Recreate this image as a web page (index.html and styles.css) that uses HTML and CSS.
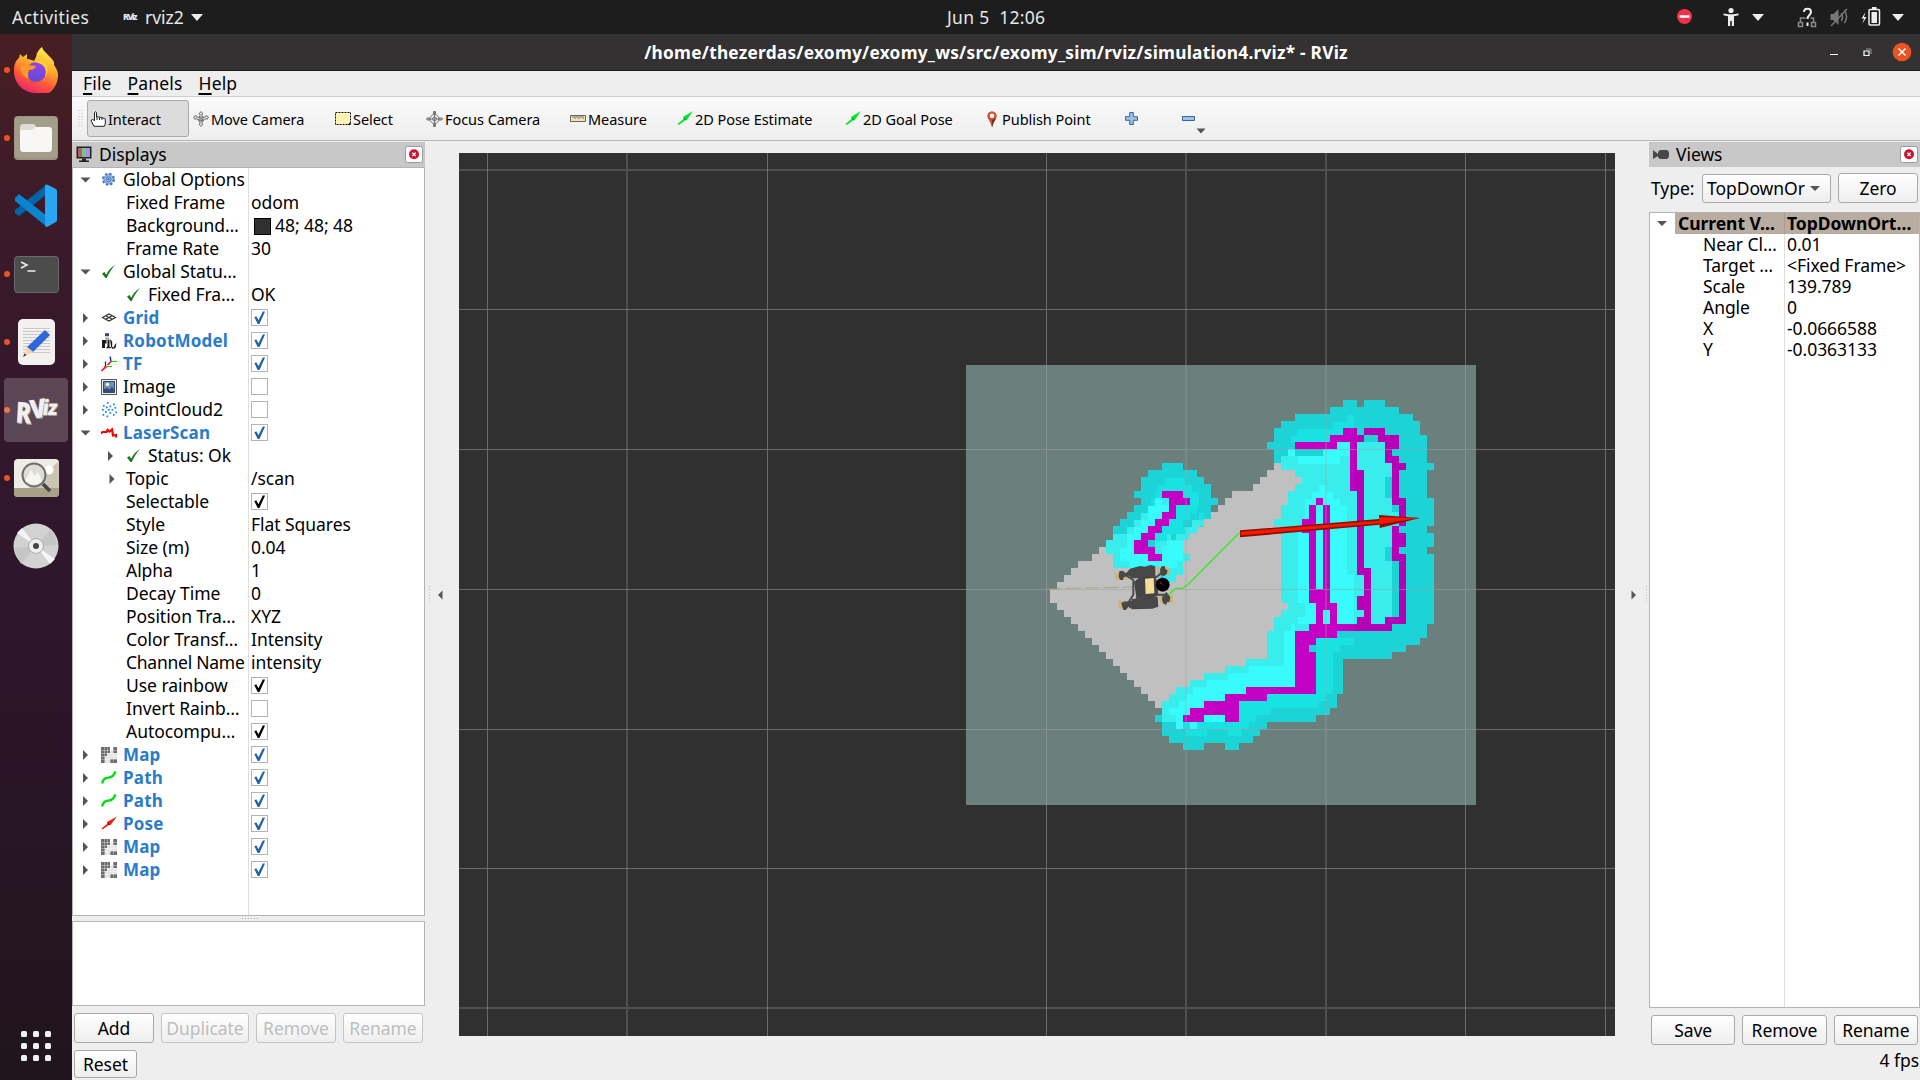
FILE: index.html
```html
<!DOCTYPE html>
<html lang="en">
<head>
<meta charset="utf-8">
<title>RViz</title>
<link rel="stylesheet" href="styles.css">
</head>
<body>
<svg width="0" height="0" class="defs">
  <defs>
    <symbol id="i-gear" viewBox="0 0 16 16"><circle cx="7.500" cy="7.300" r="5.300" fill="none" stroke="#4577b8" stroke-width="2.400" stroke-dasharray="2.400 1.760"/><circle cx="7.500" cy="7.300" r="4.700" fill="#9dbde6" stroke="#4577b8" stroke-width=".7"/><circle cx="7.500" cy="7.300" r="2.500" fill="none" stroke="#4577b8" stroke-width="1"/><circle cx="7.500" cy="7.300" r="1" fill="#3465a4"/></symbol>
    <symbol id="i-ok" viewBox="0 0 16 16"><path d="M1 9.500 3.500 8l1.700 2.800C7 6.500 9.500 4 13.800 1 10.500 5.200 7.500 9.500 5.800 14H4.400z" fill="#1c7a1c"/></symbol>
    <symbol id="i-grid" viewBox="0 0 16 16"><path d="M1.500 7.500 8 4l6.500 3.500L8 11zM4.700 5.800l6.600 3.500M11.300 5.800 4.700 9.300" fill="none" stroke="#333" stroke-width="1.200"/></symbol>
    <symbol id="i-robot" viewBox="0 0 16 16"><path d="M4 1h4M4 2.500h4" stroke="#35457e" stroke-width="1.300"/><path d="M3.500 4.500h5L8 7H5z" fill="#aaa"/><path d="M1 7h4.500v3.500H4V15H1zM6.500 7h2v7h1.300v1.200H5L6.500 13zM9 6l2.200 2.500v5.500l1.300.5L14 11.500l1.500-1.500-1 5-3 1L10 14z" fill="#1c1c1c"/></symbol>
    <symbol id="i-tf" viewBox="0 0 16 16"><path d="M10 5.500H16M6 10.500h5" stroke="#00e000" stroke-width="1.200"/><path d="M10 5.500 9 .5M4.500 11V5.500" stroke="#1717ff" stroke-width="1.300"/><path d="M10 5.500 6.500 9M4.500 11l-4 4" stroke="#f01010" stroke-width="1.600"/><circle cx="4.500" cy="11" r="1.300" fill="#f22"/></symbol>
    <symbol id="i-image" viewBox="0 0 16 16"><path d="M.5.500h15v15H.5z" fill="#ecece8" stroke="#555"/><path d="M2.500 2.500h11v11h-11z" fill="#6d8db8" stroke="#344a73"/><path d="M3 13v-3l3-1 3 1.500 2-3 2 3.500v2z" fill="#364b76"/><circle cx="6.500" cy="5.500" r="1.800" fill="#f8f4c8"/></symbol>
    <symbol id="i-cloud" viewBox="0 0 16 16"><path d="M6 0h1.700v1.700H6zM12 1.500h1.700v1.700H12zM2 3h1.700v1.700H2zM8.500 3.500h1.700v1.700H8.500zM5 4.500h1.700v1.700H5zM13.500 5h1.700v1.700h-1.700zM1 7h1.700v1.700H1zM7 7h1.700v1.700H7zM10.500 7h1.700v1.700h-1.700zM4 9h1.700v1.700H4zM14.300 9.500H16v1.700h-1.700zM8.500 10h1.700v1.700H8.500zM1.500 12h1.700v1.700H1.500zM12 12h1.700v1.700H12zM5.500 13.500h1.700v1.700H5.500z" fill="#1c86ee"/></symbol>
    <symbol id="i-laser" viewBox="0 0 16 16"><path d="M0 8.500 1.500 7h4L6.500 5l2 1.500L11 4.500l1 6 3-.5v2.500" fill="none" stroke="#f00" stroke-width="2.200"/></symbol>
    <symbol id="i-map" viewBox="0 0 16 16"><path d="M3 3h13v13H3z" fill="#e4e4e4"/><path d="M0 0h9v6H6v3H4v7H0zM12 0h4v6h-4zM9 12h7v4H9z" fill="#6d6d6d"/><path d="M3.500 0v16M6.500 0v16M9.500 0v16M12.500 0v16M0 3.500h16M0 6.500h16M0 9.500h16M0 12.500h16" stroke="#fff" stroke-width=".35"/></symbol>
    <symbol id="i-path" viewBox="0 0 16 16"><path d="M1 13.500C2.500 8 4.500 8 8 7.500S12.500 5.500 14.500 1.500" fill="none" stroke="#00dc14" stroke-width="2.400"/></symbol>
    <symbol id="i-pose" viewBox="0 0 16 16"><path d="M.5 12.500 6.500 7.500 6 6 16 .5 9.500 9 8.500 8.500 1.500 13.500z" fill="#f22008"/><path d="M6 6l3.500 3-2.500-.3z" fill="#900"/></symbol>
    <symbol id="i-green" viewBox="0 0 16 16"><path d="M.5 13 7 7.500 6 6 16 0 9.500 9.500 8.500 9 2 14z" fill="#00e828"/><path d="M6.500 6l2.800 2.800-2.300-.6z" fill="#074"/></symbol>
    <symbol id="i-arr" viewBox="0 0 16 16"><path d="M6 3 11 8l-5 5z" fill="#555"/></symbol>
    <symbol id="i-arrd" viewBox="0 0 16 16"><path d="M3.500 5.500h10L8.500 10.500z" fill="#555"/></symbol>
    <symbol id="i-close" viewBox="0 0 18 17"><rect x=".5" y=".5" width="17" height="16" rx="2" fill="#fdfdfd" stroke="#9a9a9a"/><circle cx="9" cy="8.300" r="5" fill="#cc1430"/><path d="M7.300 6.600l3.400 3.400M10.700 6.600 7.300 10" stroke="#fff" stroke-width="1.300"/></symbol>
    <linearGradient id="mag" gradientUnits="userSpaceOnUse" x1="341" x2="342" y1="0" y2="0"><stop offset="0" stop-color="#c500c5"/><stop offset="1" stop-color="#b600b6"/></linearGradient>
    <linearGradient id="ff" x1=".7" y1="0" x2=".3" y2="1"><stop offset="0" stop-color="#fff44f"/><stop offset=".35" stop-color="#ffb32c"/><stop offset=".65" stop-color="#ff5a36"/><stop offset="1" stop-color="#e5177b"/></linearGradient>
    <linearGradient id="pp" x1=".7" y1="0" x2=".3" y2="1"><stop offset="0" stop-color="#9a45e8"/><stop offset="1" stop-color="#5b4bd0"/></linearGradient>
  </defs>
</svg>

<header class="topbar">
  <span class="activities">Activities</span>
  <span class="rv-mini">RViz</span>
  <span class="appname">rviz2</span>
  <svg class="tri" width="12" height="7"><path d="M0 0h12L6 7z" fill="#eee"/></svg>
  <span class="clock">Jun 5&nbsp; 12:06</span>
  <svg class="tray" width="250" height="34" viewBox="0 0 250 34">
    <circle cx="14.500" cy="16.500" r="7.500" fill="#f5304a"/><path d="M9.500 16.500h10" stroke="#fff" stroke-width="2.500"/>
    <circle cx="61" cy="10.500" r="2.600" fill="#eee"/><path d="M53.500 13.500l5 .8h5l5-.8v1.700l-4.500 1V26h-2.200v-5h-1.600v5H58v-9.800l-4.500-1z" fill="#eee"/>
    <path d="M82 14h12l-6 7z" fill="#eee"/>
    <path d="M128.500 22.500h4v4h-4zM141.500 22.500h4v4h-4zM130.500 22v-4h5M143.500 22v-4h-3" fill="none" stroke="#8a8a8a" stroke-width="1.500"/><path d="M134 12c0-4.500 7-4.500 7 0 0 3-3.500 3-3.500 7M137.500 22.500v3.500" fill="none" stroke="#eee" stroke-width="2"/>
    <path d="M160.500 14h3l5-5v16l-5-5h-3z" fill="#777"/><path d="M171.500 13q2 4 0 8M174.500 10q4 7 0 13M161 26l16-17" fill="none" stroke="#777" stroke-width="1.500"/>
    <path d="M195.500 12l-4 6.500h2.500l-1.500 5 4-6.500H194z" fill="#eee"/><rect x="199" y="9.500" width="10.500" height="15.500" rx="1" fill="none" stroke="#eee" stroke-width="1.500"/><path d="M201.500 12h5.500v11h-5.500zM202 7h4.500v2H202z" fill="#eee"/>
    <path d="M222 14h12l-6 7z" fill="#eee"/>
  </svg>
</header>

<div class="desktop">
  <nav class="dock">
    <div class="app run"><svg width="46" height="46" viewBox="0 0 46 46"><path d="M23 46C10 46 1 36 1 24 1 17 3 13 6 11l1-4 3 3 4-3v5c3 0 5 1 7 2l2-4c1-5 3-8 6-10 1 4 4 5 6 8l4 4 2 3v3c2 3 4 6 4 10 0 12-9 22-21 21z" fill="url(#ff)"/><circle cx="23" cy="25" r="10" fill="url(#pp)"/><path d="M7 20q6-3 16-1-1 4-7 4-2 6 0 9-8-3-9-12z" fill="#ff9a22"/><path d="M22 15q6-4 11 2 4 6-1 13 4-12-10-15z" fill="#ffce38"/></svg></div>
    <div class="app run"><svg width="44" height="44" viewBox="0 0 44 44"><rect width="44" height="44" rx="4" fill="#99937f"/><rect x="1" y="1" width="42" height="41" rx="3" fill="#a39e8a"/><path d="M6 12q0-4 3-4h11l3 4h13v6H6z" fill="#dedbd2"/><path d="M6 14h12l4-3h13q3 0 3 3v18q0 4-3 4H9q-3 0-3-4z" fill="#f8f7f5"/></svg></div>
    <div class="app"><svg width="44" height="44" viewBox="0 0 44 44"><path d="M1 29l4 3 27-21V1L1 26z" fill="#0065a9"/><path d="M1 14l4-4 28 22v11L1 17z" fill="#0a84cf"/><path d="M31 1q1-1 3 0l8 4q1 1 1 2v29q0 1-1 2l-9 5q-2 0-2-2z" fill="#29a6f2"/></svg></div>
    <div class="app run"><svg width="45" height="37" viewBox="0 0 45 37"><rect x=".5" y=".5" width="44" height="36" rx="3" fill="#4c4c4c" stroke="#6a6a6a"/><path d="M7 6l6 3-6 3" fill="none" stroke="#eee" stroke-width="1.500"/><path d="M13.500 15h8" stroke="#eee" stroke-width="1.500"/></svg></div>
    <div class="app run"><svg width="37" height="46" viewBox="0 0 37 46"><rect width="37" height="46" rx="5" fill="#f2f1f0"/><path d="M5 9.500h27M5 12.500h27M5 15.500h27M5 18.500h27M5 21.500h27M5 24.500h27M5 27.500h27M5 30.500h27M5 33.500h27" stroke="#c8c8c8"/><path d="M27 11l5 5-17 17-6-5z" fill="#2d67d8"/><path d="M9 28l6 5-10 5z" fill="#f7d3ab"/><path d="M5 38l1.500-3.500L8.500 36z" fill="#333"/></svg></div>
    <div class="app run active"><span class="rviz-logo"><b class="r">R</b><b class="v">V</b><b class="s">iz</b></span></div>
    <div class="app run"><svg width="45" height="38" viewBox="0 0 45 38"><rect width="45" height="38" rx="4" fill="#eeece4"/><path d="M14 30 45 2v28z" fill="#c9c5b2"/><path d="M0 29h45v5q0 4-4 4H4q-4 0-4-4z" fill="#a8a189"/><circle cx="35" cy="11" r="4.500" fill="#fff"/><circle cx="20" cy="16" r="11.500" fill="#deddd5" stroke="#6e6e6e" stroke-width="2"/><path d="M11 22l6-11 4 6 3-4 4 9q-8 7-17 0z" fill="#f5f5f2"/><path d="M29 25l7 7" stroke="#444" stroke-width="3.500"/></svg></div>
    <div class="app"><svg width="46" height="46" viewBox="0 0 46 46"><circle cx="23" cy="23" r="22.500" fill="#d2d2d2"/><path d="M23 23 4 10l5-5zM23 23l19 13-5 5z" fill="#f6f6f6"/><path d="M23 23 8 41 1 25zM23 23 38 6l7 16z" fill="#c6c6c6"/><circle cx="23" cy="23" r="7.500" fill="#eee" stroke="#aaa"/><circle cx="23" cy="23" r="3" fill="#444"/></svg></div>
    <svg class="apps" width="30" height="30" viewBox="0 0 30 30" fill="#f0f0f0"><rect width="6" height="6" rx="1.500"/><rect x="12" width="6" height="6" rx="1.500"/><rect x="24" width="6" height="6" rx="1.500"/><rect y="12" width="6" height="6" rx="1.500"/><rect x="12" y="12" width="6" height="6" rx="1.500"/><rect x="24" y="12" width="6" height="6" rx="1.500"/><rect y="24" width="6" height="6" rx="1.500"/><rect x="12" y="24" width="6" height="6" rx="1.500"/><rect x="24" y="24" width="6" height="6" rx="1.500"/></svg>
  </nav>

  <main class="window">
    <div class="titlebar"><span>/home/thezerdas/exomy/exomy_ws/src/exomy_sim/rviz/simulation4.rviz* - RViz</span>
      <svg class="winctl" width="94" height="36" viewBox="0 0 94 36"><path d="M4 20.500h8M38.500 17h4.500v4.500h-5V17z" stroke="#fff" fill="none" stroke-width="1.200"/><path d="M40 15h5v5" stroke="#999" fill="none"/><circle cx="76" cy="18" r="9.300" fill="#e95420"/><path d="M72.500 14.500l7 7M79.500 14.500l-7 7" stroke="#fff" stroke-width="1.500"/></svg>
    </div>
    <div class="menubar"><span><u>F</u>ile</span><span><u>P</u>anels</span><span><u>H</u>elp</span></div>
    <div class="toolbar">
      <svg class="grip" width="5" height="18"><path d="M1 0v18M4 0v18" stroke="#bbb" stroke-dasharray="1 2"/></svg>
      <div class="tool t1 on"><svg width="16" height="16" viewBox="0 0 16 16"><path d="M1 9.500l1.500-1 2 1V1.500q1.200-1.500 2 0V6q1.200-1 2.300.3Q10 5.500 11 6.700q1.300-.7 2 .6 2-.6 2.300.7V13l-1 2.300H4z" fill="#fff" stroke="#222"/><path d="M7 6v3M9.500 6.500V9M12 7v2" stroke="#222"/></svg>Interact</div>
      <div class="tool t2"><svg width="16" height="16" viewBox="0 0 16 16" fill="#eee" stroke="#666" stroke-width=".9"><circle cx="8" cy="8" r="3"/><path d="M8 .5 10 3H9v10h1l-2 2.500L6 13h1V3H6zM.5 6 3 4.500v1.200l5 1.600 5-1.600V4.500L15.500 6 14 8.500l-.5-1L8 9.500l-5.500-2-.5 1z"/></svg>Move Camera</div>
      <div class="tool t3"><svg width="16" height="16" viewBox="0 0 16 16"><path d="M.5 1.500h15v12H.5z" fill="#fdf4b4" stroke="#111" stroke-dasharray="2 1"/><path d="M15.500 11v3h-3z" fill="#111"/></svg>Select</div>
      <div class="tool t4"><svg width="17" height="16" viewBox="0 0 16 16" fill="none" stroke="#777"><circle cx="8" cy="8" r="4.500"/><circle cx="8" cy="8" r="2"/><path d="M8 0v16M0 8h16M7 .5h2v3H7zM7 12.500h2v3H7zM.5 7h3v2h-3zM12.500 7h3v2h-3z"/></svg>Focus Camera</div>
      <div class="tool t5"><svg width="16" height="16" viewBox="0 0 16 16"><path d="M.5 4.500h15v6H.5z" fill="#f1e3b4" stroke="#666"/><path d="M3 5v2M5 5v3M7 5v2M9 5v3M11 5v2M13 5v3" stroke="#555" stroke-width=".8"/></svg>Measure</div>
      <div class="tool t6"><svg width="16" height="16"><use href="#i-green"/></svg>2D Pose Estimate</div>
      <div class="tool t7"><svg width="16" height="16"><use href="#i-green"/></svg>2D Goal Pose</div>
      <div class="tool t8"><svg width="12" height="17" viewBox="0 0 12 17"><path d="M6 16.500Q4.500 10.500 2 7.500.3 4 2.500 1.700q3.500-3 7 0Q11.700 4 10 7.500q-2.500 3-4 9z" fill="#d0502c"/><path d="M6 9v7.500Q7.500 11 10 7.500L8 8z" fill="#73301c"/><circle cx="6" cy="4.800" r="2.300" fill="#fff"/></svg>Publish Point</div>
      <svg class="plus" width="13" height="13" viewBox="0 0 13 13"><path d="M4.700.5h3.600v4.200h4.200v3.600H8.300v4.200H4.700V8.300H.5V4.700h4.200z" fill="#9dbfe8" stroke="#3465a4"/></svg>
      <svg class="minus" width="22" height="26" viewBox="0 0 22 26"><path d="M.5 10.500h12v4H.5z" fill="#9dbfe8" stroke="#3465a4"/><path d="M14.500 22.500h9L19 27.500z" fill="#555"/></svg>
    </div>

    <div class="work">
      <section class="displays">
        <div class="phead"><svg width="16" height="17" viewBox="0 0 16 17"><path d="M.5.500h15v12H.5z" fill="#222"/><path d="M2 2h4v9H2z" fill="#b06066"/><path d="M6 2h4v9H6z" fill="#7fbf88"/><path d="M10 2h4v9h-4z" fill="#9a96e0"/><path d="M6 12.500h4v2h3V16H3v-1.500h3z" fill="#222"/></svg><span>Displays</span><svg class="pclose" width="18" height="17"><use href="#i-close"/></svg></div>
        <div class="tree">
          <div class="row"><svg class="a"><use href="#i-arrd"/></svg><svg class="i"><use href="#i-gear"/></svg><span class="n">Global Options</span></div>
          <div class="row p"><span class="n">Fixed Frame</span><span>odom</span></div>
          <div class="row p"><span class="n">Background…</span><span><em class="sw"></em>48; 48; 48</span></div>
          <div class="row p"><span class="n">Frame Rate</span><span>30</span></div>
          <div class="row"><svg class="a"><use href="#i-arrd"/></svg><svg class="i"><use href="#i-ok"/></svg><span class="n">Global Statu…</span></div>
          <div class="row q"><svg class="a"></svg><svg class="i"><use href="#i-ok"/></svg><span class="n">Fixed Fra…</span><span>OK</span></div>
          <div class="row b"><svg class="a"><use href="#i-arr"/></svg><svg class="i"><use href="#i-grid"/></svg><span class="n">Grid</span><em class="cb on"></em></div>
          <div class="row b"><svg class="a"><use href="#i-arr"/></svg><svg class="i"><use href="#i-robot"/></svg><span class="n">RobotModel</span><em class="cb on"></em></div>
          <div class="row b"><svg class="a"><use href="#i-arr"/></svg><svg class="i"><use href="#i-tf"/></svg><span class="n">TF</span><em class="cb on"></em></div>
          <div class="row"><svg class="a"><use href="#i-arr"/></svg><svg class="i"><use href="#i-image"/></svg><span class="n">Image</span><em class="cb"></em></div>
          <div class="row"><svg class="a"><use href="#i-arr"/></svg><svg class="i"><use href="#i-cloud"/></svg><span class="n">PointCloud2</span><em class="cb"></em></div>
          <div class="row b"><svg class="a"><use href="#i-arrd"/></svg><svg class="i"><use href="#i-laser"/></svg><span class="n">LaserScan</span><em class="cb on"></em></div>
          <div class="row q"><svg class="a"><use href="#i-arr"/></svg><svg class="i"><use href="#i-ok"/></svg><span class="n">Status: Ok</span></div>
          <div class="row p"><svg class="a"><use href="#i-arr"/></svg><span class="n">Topic</span><span>/scan</span></div>
          <div class="row p"><span class="n">Selectable</span><em class="cb on"></em></div>
          <div class="row p"><span class="n">Style</span><span>Flat Squares</span></div>
          <div class="row p"><span class="n">Size (m)</span><span>0.04</span></div>
          <div class="row p"><span class="n">Alpha</span><span>1</span></div>
          <div class="row p"><span class="n">Decay Time</span><span>0</span></div>
          <div class="row p"><span class="n">Position Tra…</span><span>XYZ</span></div>
          <div class="row p"><span class="n">Color Transf…</span><span>Intensity</span></div>
          <div class="row p"><span class="n tight">Channel Name</span><span>intensity</span></div>
          <div class="row p"><span class="n">Use rainbow</span><em class="cb on"></em></div>
          <div class="row p"><span class="n">Invert Rainb…</span><em class="cb"></em></div>
          <div class="row p"><span class="n">Autocompu…</span><em class="cb on"></em></div>
          <div class="row b"><svg class="a"><use href="#i-arr"/></svg><svg class="i"><use href="#i-map"/></svg><span class="n">Map</span><em class="cb on"></em></div>
          <div class="row b"><svg class="a"><use href="#i-arr"/></svg><svg class="i"><use href="#i-path"/></svg><span class="n">Path</span><em class="cb on"></em></div>
          <div class="row b"><svg class="a"><use href="#i-arr"/></svg><svg class="i"><use href="#i-path"/></svg><span class="n">Path</span><em class="cb on"></em></div>
          <div class="row b"><svg class="a"><use href="#i-arr"/></svg><svg class="i"><use href="#i-pose"/></svg><span class="n">Pose</span><em class="cb on"></em></div>
          <div class="row b"><svg class="a"><use href="#i-arr"/></svg><svg class="i"><use href="#i-map"/></svg><span class="n">Map</span><em class="cb on"></em></div>
          <div class="row b"><svg class="a"><use href="#i-arr"/></svg><svg class="i"><use href="#i-map"/></svg><span class="n">Map</span><em class="cb on"></em></div>
        </div>
        <svg class="hgrip" width="17" height="1"><path d="M0 .5h17" stroke="#aaa" stroke-dasharray="1 2"/></svg>
        <div class="desc"></div>
        <div class="btns"><button class="w80">Add</button><button class="w88" disabled>Duplicate</button><button class="w80" disabled>Remove</button><button class="w80" disabled>Rename</button></div>
        <button class="reset">Reset</button>
      </section>

      <div class="side left"><svg width="18" height="18"><path d="M1.500 0v18" stroke="#bbb" stroke-dasharray="1 2"/><path d="M14.500 4.500 10 9l4.500 4.500z" fill="#555"/></svg></div>

      <svg class="view" width="1156" height="883" viewBox="459 153 1156 883">
        <rect x="459" y="153" width="1156" height="883" fill="#303030"/>
        <rect x="966" y="365" width="510" height="440" fill="#6b807d"/>
        <g transform="translate(1030 440) scale(.33333)" shape-rendering="crispEdges">
          <path fill="#c0c0c0" d="M249 320H207V341H186V362H144V383H123V404H102V425H81V446H60V489H81V510H102V531H123V552H144V573H165V594H186V615H207V636H228V657H249V678H270V699H291V720H312V741H333V762H354V783H375V804H420L480 760 740 700V560L800 540V150H850V60H732V90H711V111H690V132H669V153H606V174H585V195H564V216H543V237H440V320z"/>
          <path fill="#1cd4d6" d="M396 69H459V90H501V111H522V132H543V174H564V195H543V237H522V258H501V279H480V300H459V341H480V362H459V404H438V425H390V383H249V341H228V300H249V258H270V237H291V216H312V195H333V174H312V153H333V111H354V90H396z"/>
          <path fill="#19e2e2" d="M405 115H466V136H487V157H508V199H487V220H466V241H445V262H522V237H543V216H508V262H480V300H333V220H354V199H362V178H375V157H384V136H405z"/>
          <path fill="#1cd4d6" d="M522 216h21v21h-21z"/>
          <path fill="#3aeded" d="M228 300H249V282H291V262H312V241H333V220H354V199H375V174H396V153H417V240H396V262H375V283H354V321H375V304H410V283H466V262H487V241H522V258H501V279H480V300H459V341H480V362H459V404H438V425H390V383H249V341H228z"/>
          <path fill="#19e2e2" d="M438 195H500V220H480V241H459V262H438V283H410V304H375V279H396V258H417V237H438z"/>
          <path fill="#1cd4d6" d="M424 283h14v18h-14z"/>
          <path fill="#38fbfb" d="M375 174H396V195H417V216H396V237H375V258H354V279H333V300H312V341H354V362H396V321H410V304H459V362H440V383H300V362H270V325H291V283H312V262H333V241H354V199H375z"/>
          <path fill="#c500c5" d="M396 153H459V174H480V195H438V237H417V258H396V279H375V300H354V321H375V341H396V362H354V341H312V300H333V279H354V258H375V237H396V216H417V174H396z"/>
        </g>
        <g transform="translate(1240 380) scale(.33333)" shape-rendering="crispEdges">
          <path fill="#1cd4d6" d="M309 60H351V81H372V60H435V81H477V102H519V123H540V165H561V249H582V270H561V354H582V438H561V459H582V501H561V522H582V732H561V774H540V795H498V816H456V837H309V942H291V984H270V1005H228V1026H81V1047H60V1068H39V1089H-3V1110H-45V1089H-108V1110H-171V1089H-213V1068H-234V1026H-255V1005H-234V963H-213V942H-192V921H-150V900H-108V879H-45V858H18V837H81V753H102V711H123V690H144V669H123V438H102V417H123V375H144V333H165V312H186V291H165V270H123V249H102V207H81V186H102V144H123V123H165V102H270V81H309z"/>
          <path fill="#19e2e2" d="M174 147H279V126H321V105H342V186H153V168H174zM228 774H342V795H300V816H279V942H258V963H237V984H90V1005H48V1026H27V1047H6V1068H-36V1047H-99V1068H-161V1047H-192V1000H-3V942H228z"/>
          <path fill="#3aeded" d="M144 207H165V228H249V207H330V186H435V249H456V354H477V396H477V732H228V774H165V921H18V942H-45V963H-108V984H-171V1026H-234V963H-213V942H-192V921H-150V900H-108V879H-45V858H18V837H81V753H102V711H123V690H144V669H123V438H102V417H123V375H144V333H165V312H186V291H165V270H123V228H144z"/>
          <path fill="#38fbfb" d="M144 207H165V228H249V207H291V186H330V228H300V251H174V228H144zM237 315H258V336H279V357H300V378H321V585H342V732H165V921H18V942H-45V963H-108V984H-150V1005H-171V1026H-192V1005H-213V984H-183V963H-162V942H-141V921H-99V900H-36V879H27V858H132V753H153V732H174V711H195V669H174V460H195V357H216V336H237zM-150 1026H-129V1047H-150zM-108 1005H-45V1026H-108zM-192 1026h21v21h-21z"/>
          <path fill="#1cd4d6" d="M435 291h21v63h-21zM456 375h21v21h-21zM435 501h21v42h-21zM456 543h21v168h-21zM372 165h42v21h-42zM165 207h84v21h-84zM207 795h21v21h-21z"/>
          <path fill="url(#mag)" d="M165 186H291V207H165zM270 165H372V186H270zM309 144H351V165H309zM372 144H435V165H372zM414 165H477V186H414zM435 186H477V207H435zM435 207H456V228H435zM435 228H477V249H435zM456 249H498V270H456zM456 270H477V354H456zM456 354H498V375H456zM477 375H498V438H477zM456 438H477V459H456zM456 459H498V501H456zM456 501H477V522H456zM456 522H498V543H456zM477 543H498V711H477zM435 711H498V732H435zM330 186H351V270H330zM330 270H372V333H330zM351 333H372V564H351zM351 564H393V585H351zM372 585H393V648H372zM351 648H393V690H351zM372 690H393V711H372zM351 711H393V732H351zM228 354H249V375H228zM207 375H228V627H207zM186 417H207V459H186zM249 375H270V627H249zM207 627H270V669H207zM228 669H249V732H228zM249 669H291V690H249zM270 690H291V732H270zM207 732H456V753H207zM165 753H291V774H165zM165 774H228V795H165zM165 795H207V816H165zM165 816H228V921H165zM18 921H228V942H18zM-45 942H81V963H-45zM-108 963H-3V984H-108zM-150 984H-3V1005H-150zM-171 1005H-108V1026H-171zM-45 1005H-3V1026H-45z"/>
        </g>
        <g fill="none" stroke="#a0a0a4" shape-rendering="crispEdges">
          <path stroke-opacity=".52" d="M487.500 153v883M767.500 153v883M1046.500 153v883M1465.500 153v883M1605.500 153v883M459 309.500h1156M459 449.500h1156M459 589.500h1156M459 729.500h1156M459 868.500h1156"/>
          <path stroke-opacity=".28" stroke-width="2" d="M627 153v883M1186 153v883M1326 153v883M459 170h1156M459 1008h1156"/>
        </g>
        <g transform="translate(1030 440) scale(.33333)">
          <path d="M50 447 115 445 310 441" fill="none" stroke="#a39d62" stroke-width="3" stroke-dasharray="45 12" opacity=".7"/>
          <path d="M410 470 437 445h20L475 433 628 278" fill="none" stroke="#35ec1c" stroke-width="4"/>
          <path d="M255 398h36v22h-33zM380 381h38v24h-36zM264 482h38v24h-36zM388 466h41v23h-39z" fill="#cdb27a"/>
          <path d="M268 394l10-2 10 8 12-14 30-8 14 2 18-5 14 4v30l-30 6h-40l-10-8-15 5-2 8h-8l-5-10zM390 388l6-10h8l2 8 7 6-3 10-8 6-10-2zM398 466l12-10 6 10 5 4-2 15-8 2-2 7-8-2-5-12zM274 490l6-5 24-2 2-6 34-4 25-5 18 2 2 30-18 6-30 1-30 1-12-8-6 8-1 2h-8l-3-10z" fill="#484848"/>
          <path d="M312 425l20-15 42-4 9 22 2 38-30 12-36-6z" fill="#444"/>
          <path d="M290 408l20 12v44l-16 26M318 474l22-4 8-24M340 403l40 8 14-12M380 464h24" fill="none" stroke="#4a4a4a" stroke-width="6"/>
          <path d="M345 416l26-2 2 46-26 2z" fill="#f6dc96"/>
          <circle cx="398" cy="434" r="21" fill="#000"/><path d="M388 431h8M392 424v8" stroke="#c11" stroke-width="2"/><path d="M396 409v7M399 431v8" stroke="#22d" stroke-width="2"/>
        </g>
        <g transform="translate(1240 380) scale(.33333)">
          <path d="M0 451 417 417V405L540 414 419 444V434L0 472z" fill="#8f0d00"/>
          <path d="M2 455 417 422V412L536 414 419 433V430L2 466z" fill="#f61800"/>
        </g>
      </svg>

      <div class="side right"><svg width="17" height="18"><path d="M.5 4.500 5 9 .5 13.500z" fill="#555"/><path d="M15.500 0v18" stroke="#bbb" stroke-dasharray="1 2"/></svg></div>

      <section class="views">
        <div class="phead"><svg width="16" height="10" viewBox="0 0 16 10"><path d="M0 0l5 4V2q1-2 3-2h6q2 1 2 3v3q0 2-2 3H8Q5 9 5 6L0 9z" fill="#484848"/></svg><span>Views</span><svg class="pclose" width="18" height="17"><use href="#i-close"/></svg></div>
        <div class="typerow"><span>Type:</span><div class="combo">TopDownOr<svg width="10" height="5"><path d="M0 0h10L5 5z" fill="#555"/></svg></div><button class="w80">Zero</button></div>
        <div class="vtree">
          <div class="vrow head"><svg width="25" height="21"><path d="M7 8h10l-5 5z" fill="#555"/></svg><span class="n">Current V…</span><span>TopDownOrt…</span></div>
          <div class="vrow"><span class="n">Near Cl…</span><span>0.01</span></div>
          <div class="vrow"><span class="n">Target …</span><span>&lt;Fixed Frame&gt;</span></div>
          <div class="vrow"><span class="n">Scale</span><span>139.789</span></div>
          <div class="vrow"><span class="n">Angle</span><span>0</span></div>
          <div class="vrow"><span class="n">X</span><span>-0.0666588</span></div>
          <div class="vrow"><span class="n">Y</span><span>-0.0363133</span></div>
        </div>
        <div class="vbtns"><button>Save</button><button>Remove</button><button>Rename</button></div>
        <div class="fps">4 fps</div>
      </section>
    </div>
  </main>
</div>
</body>
</html>
```
FILE: styles.css
```css
* { box-sizing: border-box; }
body { margin: 0; width: 1920px; height: 1080px; overflow: hidden; font: 17.5px/23px "Noto Sans", sans-serif; color: #000; letter-spacing: -0.05px; }
svg { display: block; flex: none; }
.defs { position: absolute; }

.topbar { position: relative; height: 34px; background: #1d1d1d; color: #e8e8e8; display: flex; align-items: center; padding-left: 12px; }
.activities { width: 111px; letter-spacing: .45px; }
.rv-mini { width: 22px; font: 800 9px/12px "Noto Sans", sans-serif; letter-spacing: -1.6px; }
.appname { width: 46px; }
.clock { position: absolute; left: 947px; letter-spacing: .3px; }
.tray { margin-left: auto; }

.desktop { display: flex; height: 1046px; }
.dock { width: 72px; display: flex; flex-direction: column; align-items: center; background: linear-gradient(#471e23, #3a1a2a 20%, #30172c 45%, #281526 75%, #20151c); padding-top: 2px; }
.app { width: 72px; height: 68px; display: flex; align-items: center; justify-content: center; position: relative; }
.app.run::before { content: ""; position: absolute; left: 4px; top: 31px; width: 6px; height: 6px; border-radius: 50%; background: #e95420; }
.app.active::after { content: ""; position: absolute; left: 4px; top: 2px; width: 64px; height: 64px; border-radius: 4px; background: rgba(255,255,255,.2); }
.rviz-logo { color: #f0f0f0; display: flex; align-items: center; font-weight: 800; text-shadow: 1px 1px #999; letter-spacing: -1px; z-index: 1; }
.rviz-logo .r { font-size: 29px; transform: scaleX(.8) rotate(4deg); margin: 2px -4px 0 0; }
.rviz-logo .v { font-size: 26px; transform: scaleX(.9) rotate(-8deg); margin: -3px -4px 0 0; }
.rviz-logo .s { font-size: 21px; transform: skewX(-8deg) scaleX(.9); margin-top: -6px; }
.apps { margin: auto 0 19px; }

.window { flex: 1; background: #eee; display: flex; flex-direction: column; }
.titlebar { height: 37px; background: #333132; border-bottom: 1px solid #1c1c1c; color: #fff; font-weight: 700; font-size: 17.3px; letter-spacing: .24px; display: flex; align-items: center; justify-content: center; position: relative; }
.winctl { position: absolute; right: 0; top: 0; }
.menubar { height: 26px; border-bottom: 1px solid #cfcfcf; display: flex; gap: 16px; padding-left: 11px; line-height: 25px; letter-spacing: .15px; }
.menubar u { text-underline-offset: 3px; text-decoration-thickness: 2px; }
.toolbar { height: 44px; border-bottom: 1px solid #b5b5b5; background: linear-gradient(#fafafa, #eee); display: flex; align-items: center; padding-left: 6px; font-size: 14.500px; }
.grip { margin-right: 4px; }
.tool { display: flex; align-items: center; gap: 2px; height: 37px; padding: 1px 0 0 3px; white-space: nowrap; }
.tool.on { background: #dcdcdc; border: 1px solid #aaa; border-radius: 3px; padding-left: 2px; }
.t1 { width: 102px; margin-right: 1px; } .t2 { width: 142px; } .t3 { width: 91px; } .t4 { width: 144px; } .t5 { width: 107px; } .t6 { width: 168px; } .t7 { width: 141px; }
.t8 { width: 142px; gap: 4px; }
.minus { margin-left: 44px; overflow: visible; }

.work { flex: 1; display: flex; }
.displays { width: 353px; padding-top: 1px; display: flex; flex-direction: column; align-items: flex-start; }
.phead { width: 100%; height: 25px; background: #c8c8c8; display: flex; align-items: center; padding: 0 2px 0 4px; gap: 7px; line-height: 25px; }
.pclose { margin-left: auto; }
.tree { width: 100%; height: 749px; border: 1px solid #b4b4b4; background: linear-gradient(#dedede, #dedede) 175px 0/1px 100% no-repeat #fff; }
.row { height: 23px; display: flex; align-items: center; padding-left: 4px; white-space: nowrap; }
.row .a { width: 16px; height: 16px; margin-right: 8px; }
.row .i { width: 16px; height: 16px; margin-right: 6px; }
.row .n { width: 128px; flex: none; }
.row.p { padding-left: 53px; }
.row.p .n { width: 125px; }
.row .tight { letter-spacing: -.25px; }
.row.p .a { margin: 0 5px 0 -24px; width: 19px; }
.row.q { padding-left: 29px; }
.row.q .n { width: 103px; }
.row.b .n { font-weight: 700; color: #2a7cc9; font-size: 17px; letter-spacing: .2px; }
.sw { display: inline-block; width: 17px; height: 17px; background: #303030; border: 1px solid #000; margin: 0 4px 0 3px; vertical-align: -3px; }
.cb { width: 17px; height: 17px; border: 1px solid #b4b4b4; background: #fff; position: relative; }
.cb.on::after { content: ""; position: absolute; inset: 0; background: #000; clip-path: polygon(15% 47%, 30% 43%, 43% 68%, 72% 10%, 87% 10%, 50% 93%, 38% 93%); }
.row.b .cb.on::after { background: #2263a5; }
.hgrip { margin: 2px 0 2px 170px; }
.desc { width: 100%; height: 85px; border: 1px solid #b4b4b4; background: #fff; }
button { font: inherit; letter-spacing: inherit; color: #000; height: 30px; padding: 0; border: 1px solid #a9a9a9; border-radius: 3px; background: linear-gradient(#fff, #eee); }
button:disabled { color: #bebebe; border-color: #c4c4c4; }
.btns { display: flex; gap: 7px; margin: 7px 0 7px 2px; }
.w80 { width: 80px; } .w88 { width: 88px; }
.reset { width: 63px; height: 28px; margin-left: 2px; line-height: 24px; }
.side { width: 34px; display: flex; align-items: center; padding-bottom: 32px; }
.side.left { padding-left: 3px; }
.side.right { padding-left: 16px; }
.view { margin-top: 12px; }
.views { width: 271px; padding-top: 1px; }
.typerow { display: flex; align-items: center; height: 44px; padding: 0 2px 2px; }
.typerow > span { width: 51px; }
.combo { width: 129px; height: 29px; border: 1px solid #a9a9a9; border-radius: 3px; background: linear-gradient(#fff, #eee); display: flex; align-items: center; justify-content: space-between; padding: 0 10px 0 4px; margin-right: 7px; }
.vtree { height: 796px; border: 1px solid #b4b4b4; background: linear-gradient(#dedede, #dedede) 134px 0/1px 100% no-repeat #fff; margin-top: 1px; }
.vrow { height: 21px; display: flex; align-items: center; padding-left: 53px; white-space: nowrap; line-height: 21px; }
.vrow .n { width: 84px; flex: none; }
.vrow.head { padding: 0; font-weight: 700; background: linear-gradient(90deg, #fff 25px, #b9aca1 25px, #b9aca1 134px, #a89b91 134px, #a89b91 135px, #b9aca1 135px); }
.vrow.head .n { width: 109px; padding-left: 3px; margin-right: 3px; }
.vbtns { display: flex; gap: 7px; padding: 7px 2px 0; }
.vbtns button { width: 85px; }
.fps { text-align: right; padding: 4px 1px 0 0; }
```
